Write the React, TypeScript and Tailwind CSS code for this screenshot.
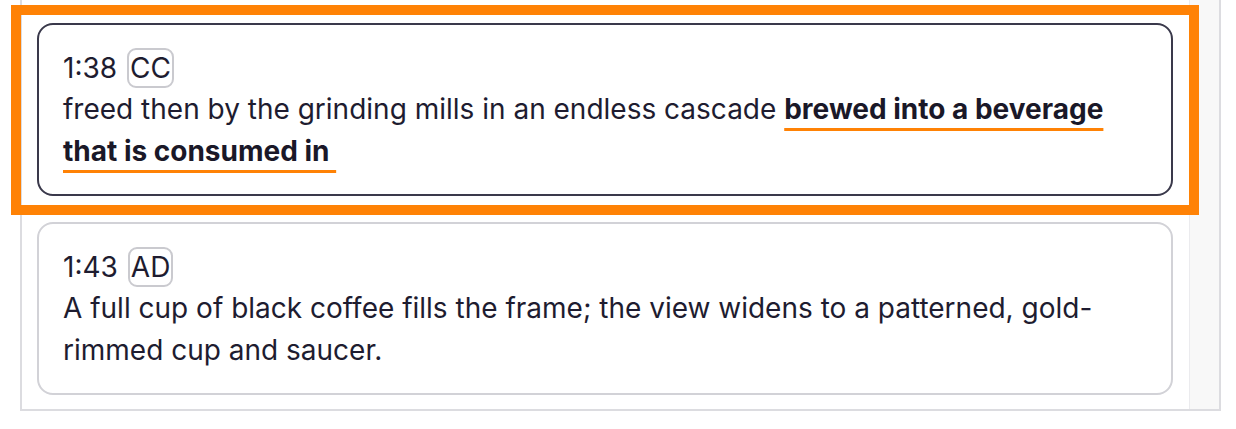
const items = [
  {
    time: "1:38",
    kind: "CC",
    active: true,
    text: "freed then by the grinding mills in an endless cascade ",
    bold: "brewed into a beverage that is consumed in\u00a0",
  },
  {
    time: "1:43",
    kind: "AD",
    active: false,
    text: "A full cup of black coffee fills the frame; the view widens to a patterned, gold-rimmed cup and saucer.",
    bold: "",
  },
];

const Cue = ({ time, kind, active, text, bold }: (typeof items)[number]) => {
  return (
    <div
      className={`relative rounded-[16px] border-2 bg-white pt-[23px] pr-[24px] pb-[22px] pl-[24px] ${
        active ? "border-[#3a394b]" : "border-[#d2d2d7]"
      }`}
    >
      {active && (
        <div className="pointer-events-none absolute -top-[20px] -right-[28px] -bottom-[21px] -left-[28px] border-[10px] border-[#ff8205]" />
      )}
      <div className="flex h-[40px] items-center gap-[10px] text-[28px] text-[#1e1c30]">
        <span>{time}</span>
        <span className="flex h-[40px] items-center rounded-[9px] border-2 border-[#cacacf] px-[1px] leading-none">
          {kind}
        </span>
      </div>
      <p className="text-[28px] leading-[42px] text-[#1e1c30]">
        {text}
        {bold && (
          <span className="font-bold text-[#1a1828] underline decoration-[#ff8205] decoration-[3px] underline-offset-[9px]">
            {bold}
          </span>
        )}
      </p>
    </div>
  );
};

export default function App() {
  return (
    <div
      className="h-[429px] w-[1236px] bg-white"
      style={{ fontFamily: "Inter, 'Noto Sans', sans-serif" }}
    >
      <div className="ml-[20px] flex w-[1201px] border-r-2 border-b-2 border-l-2 border-[#dcdce0]">
        <div className="flex flex-1 flex-col gap-[26px] pt-[23px] pr-[16px] pb-[14px] pl-[15px]">
          {items.map((item) => (
            <Cue key={item.time} {...item} />
          ))}
        </div>
        <div className="w-[30px] border-l border-[#ebebee] bg-[#f8f8f8]" />
      </div>
    </div>
  );
}
